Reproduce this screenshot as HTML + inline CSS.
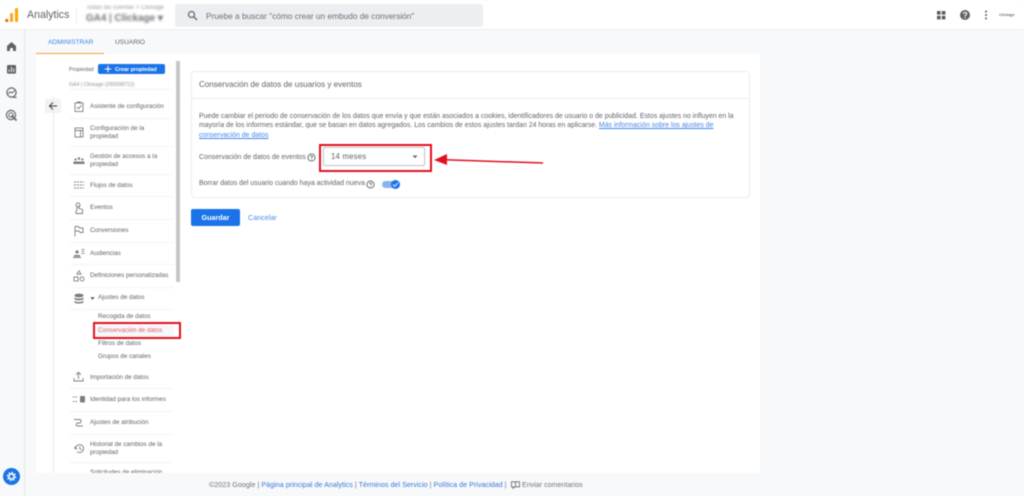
<!DOCTYPE html>
<html lang="es"><head><meta charset="utf-8"><title>Analytics</title>
<style>
html,body{margin:0;padding:0;width:1024px;height:496px;overflow:hidden;background:#f8f9fb}
#p{position:relative;width:1024px;height:496px;overflow:hidden;font-family:"Liberation Sans",sans-serif;color:#5f6368;filter:blur(.4px)}
#p div,#p span.a,#p a,#p svg{position:absolute}
.t{white-space:nowrap;font-size:6.7px;line-height:8px;color:#5f6368}
.l{line-height:7.6px;font-size:6.3px;color:#5f6368;white-space:nowrap}
.h{height:1px;background:#f3f4f5;left:70px;width:104px}
.m{font-size:6.95px;line-height:10px;white-space:nowrap;color:#5f6368}
.i{fill:none;stroke:#7a7e82;stroke-width:.9}
</style></head><body><div id="p">

<div style="left:0;top:0;width:1024px;height:30px;background:#fff;border-bottom:1px solid #eceef0;box-sizing:border-box"></div>
<svg style="left:4px;top:7px" width="15" height="16"><rect x="11" y="1" width="3" height="14" rx="1" fill="#f9ab00"/><rect x="6" y="6" width="3" height="9" rx="1" fill="#f9a825"/><circle cx="2.8" cy="13.5" r="1.6" fill="#e37400"/></svg>
<div style="left:27px;top:8px;font-size:10.6px;line-height:14px;color:#5f6368;white-space:nowrap">Analytics</div>
<div style="left:76px;top:8px;width:1px;height:15px;background:#eceef0"></div>
<div class="t" style="left:86px;top:4px;font-size:6px;color:#9a9ea3;filter:blur(.8px)">Todas las cuentas &gt; Clickage</div>
<div style="left:86px;top:12px;font-size:9.9px;font-weight:bold;line-height:14px;color:#70757a;white-space:nowrap;filter:blur(1px)">GA4 | Clickage ▾</div>
<div style="left:175px;top:4px;width:308px;height:23px;background:#eceef1;border-radius:3px"></div>
<svg style="left:187px;top:10px" width="11" height="11" viewBox="0 0 11 11"><circle cx="4.5" cy="4.5" r="3" fill="none" stroke="#5f6368" stroke-width="1.2"/><path d="M6.8 6.8L10 10" stroke="#5f6368" stroke-width="1.3"/></svg>
<div style="left:206px;top:10px;font-size:8.3px;line-height:12px;color:#6b6f74;white-space:nowrap">Pruebe a buscar "cómo crear un embudo de conversión"</div>

<svg style="left:936px;top:10px" width="10" height="10"><rect x="1" y="1" width="3.6" height="3.6" fill="#5a5e63"/><rect x="5.8" y="1" width="3.6" height="3.6" fill="#5a5e63"/><rect x="1" y="5.8" width="3.6" height="3.6" fill="#5a5e63"/><rect x="5.8" y="5.8" width="3.6" height="3.6" fill="#5a5e63"/></svg>
<svg style="left:959px;top:9px" width="12" height="12"><circle cx="6" cy="6" r="5" fill="#5f6368"/><path d="M4.4 4.8C4.4 2.9 7.7 2.9 7.7 4.8C7.7 6 6 6 6 7.4" fill="none" stroke="#fff" stroke-width="1.1"/><rect x="5.4" y="8.1" width="1.2" height="1.2" fill="#fff"/></svg>
<svg style="left:984px;top:10px" width="4" height="10"><circle cx="2" cy="1.5" r="1" fill="#5a5e63"/><circle cx="2" cy="5" r="1" fill="#5a5e63"/><circle cx="2" cy="8.5" r="1" fill="#5a5e63"/></svg>
<div style="left:999px;top:12px;font-size:3.8px;line-height:6px;color:#70757a;font-weight:bold;white-space:nowrap">Clickage</div>

<div style="left:24px;top:30px;width:1px;height:466px;background:#e4e6e8"></div>
<svg style="left:6px;top:41px" width="11" height="11"><path d="M5.5 1L10 5V10H7V7H4V10H1V5Z" fill="#5f6368"/></svg>
<svg style="left:6px;top:64px" width="11" height="10"><rect x="1" y="1" width="9" height="8.6" rx="1" fill="#5f6368"/><path d="M3.2 8V5.5M5.5 8V3M7.8 8V4.5" stroke="#fff" stroke-width=".9"/></svg>
<svg style="left:5px;top:86px" width="13" height="13"><circle cx="6.5" cy="6.5" r="4.6" fill="none" stroke="#5f6368" stroke-width="1.2"/><path d="M3.2 7.8L5.5 5.8L7.2 7L10 4.2" fill="none" stroke="#5f6368" stroke-width="1"/><path d="M8 11.4L11.6 11.4" stroke="#5f6368" stroke-width="1.1"/></svg>
<svg style="left:5px;top:109px" width="13" height="13"><circle cx="6" cy="6" r="4.6" fill="none" stroke="#5f6368" stroke-width="1.2"/><circle cx="6" cy="6" r="2.2" fill="none" stroke="#5f6368" stroke-width="1"/><path d="M6.5 6.5L11.5 11.5" stroke="#5f6368" stroke-width="1.6"/></svg>
<div style="left:3px;top:468px;width:17px;height:17px;border-radius:50%;background:#1a73e8"></div>
<svg style="left:6px;top:471px" width="11" height="11" viewBox="0 0 11 11"><circle cx="5.5" cy="5.5" r="2.6" fill="none" stroke="#fff" stroke-width="1.6"/><circle cx="5.5" cy="5.5" r="4.1" fill="none" stroke="#fff" stroke-width="1.3" stroke-dasharray="1.6 1.6"/></svg>

<div style="left:48px;top:38px;font-size:6.6px;line-height:9px;color:#4285e8;white-space:nowrap">ADMINISTRAR</div>
<div style="left:115px;top:38px;font-size:6.6px;line-height:9px;color:#5f6368;white-space:nowrap">USUARIO</div>
<div style="left:36px;top:52.5px;width:68px;height:1.5px;background:#f7a035"></div>

<div style="left:36px;top:54px;width:724px;height:419px;background:#fff"></div>
<div style="left:53px;top:96px;width:1px;height:377px;background:#e8eaed"></div>
<div style="left:176px;top:61px;width:4px;height:221px;background:#c6c7c8"></div>

<div class="t" style="left:69px;top:66px;font-size:5.4px">Propiedad</div>
<div style="left:98px;top:64px;width:67px;height:10px;background:#1a73e8;border-radius:2px"></div>
<svg style="left:104px;top:65px" width="8" height="8"><path d="M4 .8V7.2M.8 4H7.2" stroke="#fff" stroke-width="1"/></svg>
<div class="t" style="left:115px;top:66px;font-size:5.4px;color:#fff;font-weight:bold">Crear propiedad</div>
<div class="t" style="left:69px;top:81px;font-size:5.2px;color:#8a8e93;filter:blur(.6px)">GA4 | Clickage (290598712)</div>
<div class="h" style="top:89px"></div>

<div style="left:45px;top:99px;width:16px;height:14px;background:#f1f2f3;border-radius:2px"></div>
<svg style="left:48px;top:101px" width="10" height="10"><path d="M9 5H1.5M5 1.5L1.5 5L5 8.5" fill="none" stroke="#3c4043" stroke-width="1"/></svg>

<svg class="i" style="left:74px;top:101px" width="10" height="11"><rect x="1" y="2" width="8" height="8.5"/><path d="M3 6L4.6 7.8L7.4 4.2M3.5 2V1H6.5V2"/></svg>
<div class="l" style="left:90px;top:103px">Asistente de configuración</div>
<div class="h" style="top:118px"></div>

<svg class="i" style="left:74px;top:127px" width="10" height="11"><rect x="1" y="1" width="8" height="9"/><path d="M1 3.5H9M6.5 3.5V10"/></svg>
<div class="l" style="left:90px;top:125px">Configuración de la<br>propiedad</div>
<div class="h" style="top:146px"></div>

<svg style="left:73px;top:156px" width="12" height="9"><circle cx="2.5" cy="3.5" r="1.1" fill="#7a7e82"/><circle cx="6" cy="2.5" r="1.3" fill="#7a7e82"/><circle cx="9.5" cy="3.5" r="1.1" fill="#7a7e82"/><rect x="0.5" y="5.5" width="11" height="2.5" fill="#7a7e82"/></svg>
<div class="l" style="left:90px;top:153px">Gestión de accesos a la<br>propiedad</div>
<div class="h" style="top:174px"></div>

<svg class="i" style="left:74px;top:180px" width="10" height="10" stroke-dasharray="2 1"><path d="M0 2H10M0 5H10M0 8H10"/></svg>
<div class="l" style="left:90px;top:182px">Flujos de datos</div>
<div class="h" style="top:196px"></div>

<svg class="i" style="left:74px;top:202px" width="10" height="12"><circle cx="4" cy="3" r="2"/><path d="M3 4V8L2 9V11.5H8.5V7.5L5 6.5V3.5"/></svg>
<div class="l" style="left:90px;top:204px">Eventos</div>
<div class="h" style="top:219px"></div>

<svg class="i" style="left:74px;top:225px" width="10" height="12"><path d="M1 11.5V1.5H4.5L5.5 3H9V7.5H6L5 6H1"/></svg>
<div class="l" style="left:90px;top:227px">Conversiones</div>
<div class="h" style="top:242px"></div>

<svg style="left:73px;top:248px" width="12" height="10"><circle cx="4" cy="4" r="1.6" fill="#7a7e82"/><rect x="1" y="7" width="6" height="1.6" fill="#7a7e82"/><rect x="0" y="9" width="8" height="1" fill="#7a7e82"/><path d="M8.5 1.5H11.5M8.5 3.5H11.5M8.5 5.5H11.5" stroke="#7a7e82" stroke-width=".8"/></svg>
<div class="l" style="left:90px;top:250px">Audiencias</div>
<div class="h" style="top:264px"></div>

<svg class="i" style="left:73px;top:270px" width="12" height="12"><path d="M6 .8L8 4.2H4Z"/><rect x="1" y="7" width="4" height="4"/><circle cx="9" cy="9" r="2"/></svg>
<div class="l" style="left:90px;top:272px">Definiciones personalizadas</div>
<div class="h" style="top:287px"></div>

<svg style="left:73px;top:293px" width="12" height="12"><ellipse cx="6" cy="2.5" rx="4.6" ry="1.9" fill="#7a7e82"/><path d="M1.4 4.2C2.5 6 9.5 6 10.6 4.2V6C9.5 7.8 2.5 7.8 1.4 6ZM1.4 7.6C2.5 9.4 9.5 9.4 10.6 7.6V9.2C9.5 11 2.5 11 1.4 9.2Z" fill="#7a7e82"/></svg>
<svg style="left:90px;top:296px" width="5" height="5"><path d="M.3 1.2H4.7L2.5 3.8Z" fill="#4a4e52"/></svg>
<div class="l" style="left:98px;top:294px">Ajustes de datos</div>
<div class="h" style="top:309px"></div>

<div class="l" style="left:98px;top:313px">Recogida de datos</div>
<div style="left:96px;top:323px;width:78px;height:14px;background:#f6f7f9"></div>
<div style="left:93px;top:322px;width:88px;height:17px;box-sizing:border-box;border:2px solid #e3101f"></div>
<div class="l" style="left:98px;top:327px;color:#d9606b">Conservación de datos</div>
<div class="l" style="left:98px;top:340px">Filtros de datos</div>
<div class="l" style="left:98px;top:353px">Grupos de canales</div>

<svg class="i" style="left:73px;top:371px" width="11" height="11"><path d="M1 7V10H10V7M5.5 8V1.5M3 3.8L5.5 1.3L8 3.8"/></svg>
<div class="l" style="left:90px;top:374px">Importación de datos</div>
<div class="h" style="top:388px"></div>

<svg class="i" style="left:73px;top:395px" width="12" height="9"><rect x="7.5" y="1.5" width="4" height="5.5" fill="#7a7e82"/><path d="M0 2H5M0 6.5H5" stroke-dasharray="1.5 1"/></svg>
<div class="l" style="left:90px;top:396px">Identidad para los informes</div>
<div class="h" style="top:411px"></div>

<svg class="i" style="left:73px;top:417px" width="11" height="11"><path d="M1 2.5H6.5C8.5 2.5 8.5 6 6.5 6H4.5C2.8 6 2.8 9 4.5 9H10"/></svg>
<div class="l" style="left:90px;top:419px">Ajustes de atribución</div>
<div class="h" style="top:434px"></div>

<svg class="i" style="left:74px;top:443px" width="11" height="11"><path d="M1.6 5.5A4 4 0 1 1 3 8.6M1 3.5V5.8H3.2M5.8 3.2V5.8L7.8 7" /></svg>
<div class="l" style="left:90px;top:441px">Historial de cambios de la<br>propiedad</div>
<div class="h" style="top:462px"></div>
<div class="l" style="left:90px;top:469px;height:4px;overflow:hidden">Solicitudes de eliminación</div>

<div style="left:191px;top:71px;width:559px;height:127px;box-sizing:border-box;border:1px solid #ebedef;border-radius:4px;background:#fff"></div>
<div style="left:192px;top:98px;width:557px;height:1px;background:#ebedef"></div>
<div style="left:199px;top:79px;font-size:8.05px;line-height:12px;color:#5f6368;white-space:nowrap">Conservación de datos de usuarios y eventos</div>
<div class="m" style="left:199px;top:112px">Puede cambiar el periodo de conservación de los datos que envía y que están asociados a cookies, identificadores de usuario o de publicidad. Estos ajustes no influyen en la</div>
<div class="m" style="left:199px;top:121px">mayoría de los informes estándar, que se basan en datos agregados. Los cambios de estos ajustes tardan 24 horas en aplicarse. <span style="color:#4285e8;text-decoration:underline">Más información sobre los ajustes de</span></div>
<div class="m" style="left:199px;top:131px;color:#4285e8;text-decoration:underline">conservación de datos</div>
<div class="m" style="left:199px;top:153px">Conservación de datos de eventos</div>
<svg style="left:307px;top:153px" width="9" height="9"><circle cx="4.5" cy="4.5" r="3.6" fill="none" stroke="#5f6368" stroke-width=".9"/><path d="M3.3 3.7C3.3 2.4 5.7 2.4 5.7 3.7C5.7 4.5 4.5 4.5 4.5 5.4M4.5 6V6.8" fill="none" stroke="#5f6368" stroke-width=".8"/></svg>

<div style="left:323px;top:147px;width:102px;height:19px;box-sizing:border-box;border:1px solid #c6c8cb;border-radius:2px;background:#fff;box-shadow:0 0 1px #ccc"></div>
<div style="left:331px;top:151px;font-size:7.8px;letter-spacing:.2px;line-height:11px;color:#5f6368;white-space:nowrap">14 meses</div>
<svg style="left:412px;top:155px" width="6" height="4"><path d="M.5.5H5.5L3 3.2Z" fill="#5f6368"/></svg>
<div style="left:319px;top:144px;width:113px;height:28px;box-sizing:border-box;border:2px solid #e3101f"></div>

<svg style="left:430px;top:150px;width:120px;height:24px" width="120" height="24" viewBox="0 0 120 24"><path d="M15 9.8L113 13" stroke="#e3101f" stroke-width="1.5" fill="none"/><path d="M17 4L17 15L4 10Z" fill="#e3101f"/></svg>

<div class="m" style="left:199px;top:179px">Borrar datos del usuario cuando haya actividad nueva</div>
<svg style="left:366px;top:180px" width="9" height="9"><circle cx="4.5" cy="4.5" r="3.6" fill="none" stroke="#5f6368" stroke-width=".9"/><path d="M3.3 3.7C3.3 2.4 5.7 2.4 5.7 3.7C5.7 4.5 4.5 4.5 4.5 5.4M4.5 6V6.8" fill="none" stroke="#5f6368" stroke-width=".8"/></svg>
<div style="left:382px;top:181px;width:16px;height:7px;border-radius:4px;background:#8ab4f0"></div>
<div style="left:391px;top:180px;width:9px;height:9px;border-radius:50%;background:#1a73e8"></div>
<svg style="left:392px;top:181px" width="7" height="7"><path d="M1 3.6L2.8 5.3L6 1.8" fill="none" stroke="#fff" stroke-width=".9"/></svg>

<div style="left:191px;top:209px;width:49px;height:17px;background:#1a73e8;border-radius:2px"></div>
<div style="left:191px;top:212px;width:49px;text-align:center;font-size:7.2px;line-height:11px;color:#fff;font-weight:bold;white-space:nowrap">Guardar</div>
<div style="left:248px;top:212px;font-size:7.2px;line-height:11px;color:#4d8bec;white-space:nowrap">Cancelar</div>

<div class="m" style="left:209px;top:480px;font-size:7.2px;color:#70757a">©2023 Google | <span style="color:#3b78d8">Página principal de Analytics</span> | <span style="color:#3b78d8">Términos del Servicio</span> | <span style="color:#3b78d8">Política de Privacidad</span> |</div>
<svg style="left:511px;top:481px" width="9" height="8"><path d="M.5.8H8.5V5.8H3.6L2 7.4V5.8H.5ZM4.5.8V5.8" fill="none" stroke="#5f6368" stroke-width=".8"/></svg>
<div class="m" style="left:522px;top:480px;font-size:7.1px;color:#70757a">Enviar comentarios</div>
</div></body></html>
